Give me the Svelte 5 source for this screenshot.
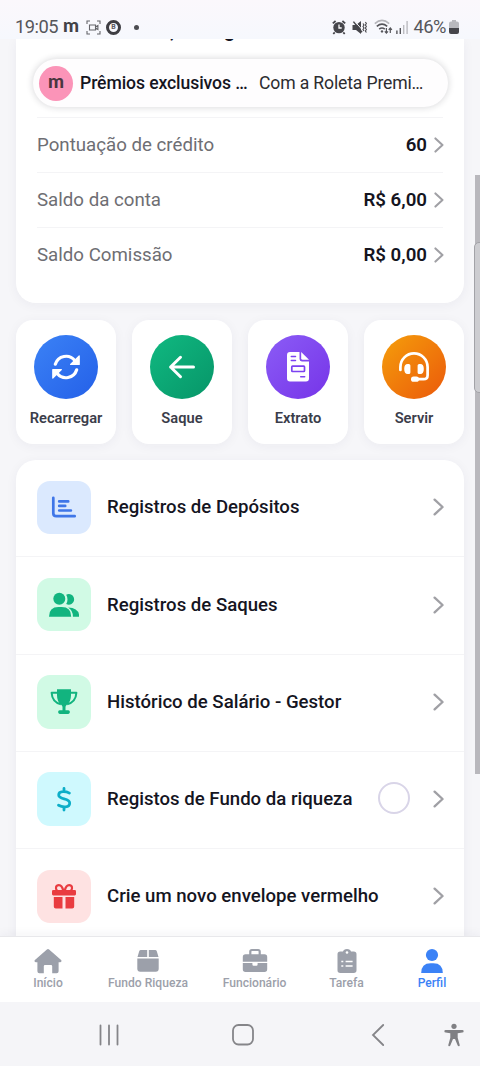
<script>
  const balances = [
    { label: 'Pontuação de crédito', value: '60' },
    { label: 'Saldo da conta', value: 'R$ 6,00' },
    { label: 'Saldo Comissão', value: 'R$ 0,00' }
  ];
  const actions = [
    { label: 'Recarregar', icon: 'refresh', tone: 'blue' },
    { label: 'Saque', icon: 'back', tone: 'green' },
    { label: 'Extrato', icon: 'invoice', tone: 'purple' },
    { label: 'Servir', icon: 'headset', tone: 'orange' }
  ];
  const entries = [
    { label: 'Registros de Depósitos', icon: 'bars', tone: 'sky' },
    { label: 'Registros de Saques', icon: 'users', tone: 'mint' },
    { label: 'Histórico de Salário - Gestor', icon: 'trophy', tone: 'mint' },
    { label: 'Registos de Fundo da riqueza', icon: 'dollar', tone: 'cyan' },
    { label: 'Crie um novo envelope vermelho', icon: 'gift', tone: 'rose' }
  ];
  const tabs = [
    { label: 'Início', icon: 'home' },
    { label: 'Fundo Riqueza', icon: 'box' },
    { label: 'Funcionário', icon: 'briefcase' },
    { label: 'Tarefa', icon: 'clipboard' },
    { label: 'Perfil', icon: 'person', active: true }
  ];
</script>

{#snippet chevron(size)}
  <svg class="chevron" width={size * 0.6} height={size} viewBox="0 0 12 20" fill="none" stroke="#a0a0a5" stroke-width="2.6" stroke-linecap="round" stroke-linejoin="round"><path d="M1.8 1.8 10.6 10 1.8 18.2" /></svg>
{/snippet}

{#snippet actionIcon(name)}
  <svg width="30" height="30" viewBox="0 0 30 30" fill="none" stroke="#fff" stroke-width="3" stroke-linecap="round" stroke-linejoin="round">
    {#if name === 'refresh'}
      <path d="M4.3 12.2A11.3 11.3 0 0 1 23.8 8.4M25.7 17.8A11.3 11.3 0 0 1 6.2 21.6" stroke-width="3.2" />
      <path d="M28.2 4v8.4h-8.6zM1.8 26v-8.4h8.6z" fill="#fff" stroke-width="1.2" />
    {:else if name === 'back'}
      <path d="M3.6 15H26.5M13.5 5.3 3.6 15l9.9 9.7" />
    {:else if name === 'invoice'}
      <path d="M7 0h9.5v7q0 2.4 2.4 2.4H26v17.2q0 3-3 3H7q-3 0-3-3V3q0-3 3-3z" fill="#fff" stroke="none" />
      <path d="M18.2 0 26 7.8h-6.2q-1.6 0-1.6-1.6z" fill="#fff" stroke="none" />
      <path d="M8.3 4.5h4.2M8.3 8.4h4.2M17.7 24.8h4" stroke="#7c42f1" stroke-width="1.5" />
      <rect x="8.8" y="14.2" width="12.7" height="5.3" rx=".7" stroke="#7c42f1" stroke-width="1.7" />
    {:else}
      <path d="M1.4 18v-3a13.6 13.6 0 0 1 27.2 0v8.2q0 4-4 4H17" stroke-width="2.7" />
      <path d="M9.8 12H8.7Q5.2 12 5.2 17t3.5 5h1.1q1.6 0 1.6-1.6v-6.8Q11.4 12 9.8 12zM20.2 12h1.1q3.5 0 3.5 5t-3.5 5h-1.1q-1.6 0-1.6-1.6v-6.8q0-1.6 1.6-1.6z" fill="#fff" stroke="none" />
      <rect x="12" y="24.6" width="8" height="5.2" rx="2.6" fill="#fff" stroke="none" />
    {/if}
  </svg>
{/snippet}

{#snippet entryIcon(name)}
  <svg width="30" height="30" viewBox="0 0 30 30" fill="currentColor">
    {#if name === 'bars'}
      <path d="M4.3 5.8v15.4q0 3 3 3h18.4M10.2 9.4h9M10.2 13.9h6M10.2 18.5h11.7" fill="none" stroke="currentColor" stroke-width="2.7" stroke-linecap="round" />
    {:else if name === 'users'}
      <circle cx="10.3" cy="8.7" r="6" />
      <path d="M0 26.7q0-9.6 9.5-9.6h3.2q9.5 0 9.5 9.6zM17.2 4.8a5.3 5.3 0 1 1 0 9.2q2.6-4.6 0-9.2zM19.2 17.4q11 .3 11 9.3h-6.3q.1-6.3-4.7-9.3z" />
    {:else if name === 'trophy'}
      <path d="M8 2.2h14v6q0 6.8-4.4 9.7-1.1.8-1.1 2v3.4h2.8q1.6 0 1.6 1.8t-1.6 1.8h-8.6q-1.6 0-1.6-1.8t1.6-1.8h2.8v-3.4q0-1.2-1.1-2Q8 15 8 8.2z" />
      <path d="M8 5.7H2.6q.5 9.3 9.3 11.6M22 5.7h5.4q-.5 9.3-9.3 11.6" fill="none" stroke="currentColor" stroke-width="2" stroke-linejoin="round" />
    {:else if name === 'dollar'}
      <path d="M15 4.5v3M15 23v3M20.4 9.1C17.2 7.2 9.7 6.2 9.7 11c0 5.1 11 2.6 11 8 0 5-7.3 4.5-11.2 2.3" fill="none" stroke="currentColor" stroke-width="2.8" stroke-linecap="round" />
    {:else}
      <rect x="3" y="9" width="24" height="5.4" rx="1.3" />
      <path d="M4.8 16h8.7v11.4H6.8q-2 0-2-2zM16.5 16h8.7v9.4q0 2-2 2h-6.7z" />
      <path d="M14.2 9.8c-.6-3.4-2-5.7-4.3-5.7-3.1 0-3.9 3.6-1.8 5.7M15.8 9.8c.6-3.4 2-5.7 4.3-5.7 3.1 0 3.9 3.6 1.8 5.7" fill="none" stroke="currentColor" stroke-width="2.2" />
    {/if}
  </svg>
{/snippet}

{#snippet tabIcon(name)}
  <svg width="28" height="28" viewBox="0 0 28 28" fill="currentColor">
    {#if name === 'home'}
      <path d="M12.9 2.4q1.1-.9 2.2 0l12 10.6q.7.8.3 1.6-.4.7-1.3.7h-1.5v8.9q0 2-2 2h-4.4v-6.9q0-1.2-1.2-1.2h-6q-1.2 0-1.2 1.2v6.9H5.4q-2 0-2-2v-8.9H1.9q-.9 0-1.3-.7-.4-.8.3-1.6z" />
    {:else if name === 'box'}
      <path d="M6.8 3h6.4v7H3.5l1.7-5.8Q5.6 3 6.8 3zM14.8 3h6.4q1.2 0 1.6 1.2l1.7 5.8h-9.7zM3.3 11.5h21.4v10.2q0 3-3 3H6.3q-3 0-3-3z" />
    {:else if name === 'briefcase'}
      <path d="M9.3 8V4.6q0-1.6 1.6-1.6h6.2q1.6 0 1.6 1.6V8" fill="none" stroke="currentColor" stroke-width="2.2" />
      <path d="M4.5 7.3h19q2.7 0 2.7 2.7v4.7H1.8V10q0-2.7 2.7-2.7zM1.8 16h9.6v1.6q0 1.2 1.2 1.2h2.8q1.2 0 1.2-1.2V16h9.6v6.3q0 2.7-2.7 2.7h-19q-2.7 0-2.7-2.7z" />
    {:else if name === 'clipboard'}
      <path d="M7.2 4.6H10q.6-2.6 4-2.6t4 2.6h2.8q2.7 0 2.7 2.7v16q0 2.7-2.7 2.7H7.2q-2.7 0-2.7-2.7v-16q0-2.7 2.7-2.7z" />
      <circle cx="14" cy="5.5" r="1.3" fill="#fff" />
      <path d="M8.3 14.4h2M12.6 14.4h7M8.3 19h2M12.6 19h7" stroke="#fff" stroke-width="1.5" />
    {:else}
      <circle cx="14" cy="8" r="6.1" />
      <path d="M3.2 26q0-9.8 9.4-9.8h2.8q9.4 0 9.4 9.8z" />
    {/if}
  </svg>
{/snippet}

<div class="screen">
  <header class="status">
    <span class="clock">19:05</span>
    <span class="brand">m</span>
    <svg class="rec" width="15" height="15" viewBox="0 0 15 15" fill="none" stroke="#65656a" stroke-width="1.1"><path d="M1 4V1h3M11 1h3v3M14 11v3h-3M4 14H1v-3M3.5 5h6v5h-6zM9.5 7l2.4-1.5v4L9.5 8" /></svg>
    <span class="ring">B</span>
    <span class="dot"></span>
    <span class="spacer"></span>
    <svg width="14" height="15" viewBox="0 0 14 15"><circle cx="7" cy="7.6" r="5.7" fill="#46464b" /><path d="M.8 3.4 3.6 1M13.2 3.4 10.4 1M2.7 12.4 1.3 14M11.3 12.4l1.4 1.6" stroke="#46464b" stroke-width="1.8" /><path d="M7 4.4V8h2.7" stroke="#fff" stroke-width="1.3" fill="none" /></svg>
    <svg class="mute" width="15" height="15" viewBox="0 0 15 15"><path d="M.5 5H4l5-4v13L4 10H.5z" fill="#46464b" /><path d="M2.6 1.2 11 10.6" stroke="#f7f7fc" stroke-width="1" /><path d="M1.4 1.6 10 12.2" stroke="#46464b" stroke-width="1.5" /><path d="M11 3.5l1 1.5-1 1.5 1 1.5-1 1.5 1 1.5M13.4 2l1 1.5-1 1.5 1 1.5-1 1.5 1 1.5-1 1.5 1 1.5" stroke="#46464b" stroke-width="1.1" fill="none" /></svg>
    <svg class="wifi" width="19" height="16" viewBox="0 0 19 16" fill="none" stroke-width="1.6"><path d="M.8 4.6Q8-1.7 15.2 4.6" stroke="#b5b5ba" /><path d="M2.8 7.4Q8 3 13.2 7.4M5.2 10.2q2.8-2.4 5.6 0" stroke="#55555a" /><circle cx="8" cy="12.4" r="1.2" fill="#55555a" /><path d="M12.4 9v5M10.8 12.4l1.6 1.8 1.6-1.8M16.3 14V9M14.7 10.8 16.3 9l1.6 1.8" stroke="#55555a" stroke-width="1.2" /></svg>
    <svg class="signal" width="12" height="13" viewBox="0 0 12 13"><path d="M.9 9.5V13M4.3 7v6" stroke="#55555a" stroke-width="1.4" /><path d="M7.7 4v9M11.1 0v13" stroke="#bbbbc0" stroke-width="1.4" /></svg>
    <span class="percent">46%</span>
    <svg width="10" height="14" viewBox="0 0 10 14"><path d="M2 1.5h1V0h4v1.5h1q2 0 2 2V8H0V3.5q0-2 2-2z" fill="#b9b9be" /><path d="M0 8h10v4q0 2-2 2H2q-2 0-2-2z" fill="#46464b" /></svg>
  </header>

  <main class="page">
    <section class="card summary">
      <div class="heading"><span>,</span><span>g</span></div>
      {#each balances as row}
        <div class="balance">
          <span class="name">{row.label}</span>
          <strong>{row.value}</strong>
          {@render chevron(16)}
        </div>
      {/each}
    </section>

    <section class="actions">
      {#each actions as a}
        <div class="card action">
          <span class="disc {a.tone}">{@render actionIcon(a.icon)}</span>
          <span class="caption">{a.label}</span>
        </div>
      {/each}
    </section>

    <section class="card list">
      {#each entries as e}
        <div class="entry">
          <span class="tile {e.tone}">{@render entryIcon(e.icon)}</span>
          <span class="title">{e.label}</span>
          {@render chevron(18)}
        </div>
      {/each}
    </section>
  </main>

  <nav class="tabs">
    {#each tabs as t}
      <div class="tab" class:active={t.active}>
        {@render tabIcon(t.icon)}
        <span>{t.label}</span>
      </div>
    {/each}
  </nav>

  <footer class="system">
    <svg width="20" height="22" viewBox="0 0 20 22" stroke="#858589" stroke-width="1.8" stroke-linecap="round"><path d="M1.5 1.5v19M10 1.5v19M18.5 1.5v19" /></svg>
    <svg width="22" height="22" viewBox="0 0 22 22" fill="none" stroke="#858589" stroke-width="1.8"><rect x="1" y="1" width="20" height="19.5" rx="5.5" /></svg>
    <svg width="14" height="24" viewBox="0 0 14 24" fill="none" stroke="#858589" stroke-width="1.8" stroke-linecap="round"><path d="M12.2 2 2 12l10.2 10" /></svg>
    <svg width="20" height="24" viewBox="0 0 20 24" fill="#808084"><circle cx="10" cy="3.3" r="2.6" /><path d="M1.6 7h16.8a1.2 1.2 0 0 1 0 2.5l-4.7.7v4.6l2 7.2q.2 1-.6 1.3-1 .2-1.4-.8L11 16H9l-2.7 6.5q-.4 1-1.4.8-.8-.3-.6-1.3l2-7.2v-4.6l-4.7-.7a1.2 1.2 0 0 1 0-2.5z" /></svg>
  </footer>

  <aside class="toast">
    <span class="avatar">m</span>
    <strong>Prêmios exclusivos …</strong>
    <span class="message">Com a Roleta Premi…</span>
  </aside>
  <div class="scrollbar"></div>
  <div class="handle"></div>
  <div class="touch"></div>
</div>

<style>
  :global(body) { margin: 0; }
  .screen {
    position: relative;
    display: flex;
    flex-direction: column;
    width: 480px;
    height: 1066px;
    overflow: hidden;
    background: #f6f6f9;
    color: #15151f;
    font-family: Roboto, sans-serif;
  }
  svg { display: block; flex: none; }

  .status {
    display: flex;
    align-items: center;
    flex: none;
    box-sizing: border-box;
    height: 39px;
    padding: 15px 21px 0 15px;
    background: linear-gradient(#fbf8fc, #f6f8fd);
    color: #56565b;
  }
  .clock { width: 48px; font-size: 18.3px; letter-spacing: -0.5px; line-height: 24px; }
  .brand { width: 23px; font: 900 19px/20px Lato, sans-serif; color: #424247; margin-top: -5px; }
  .ring {
    box-sizing: border-box;
    width: 15px; height: 15px;
    margin-left: 5px;
    border: 3px solid #3e3e43;
    border-radius: 50%;
    font-size: 7px; font-weight: 700; line-height: 9px;
    text-align: center;
  }
  .dot { width: 5px; height: 5px; margin-left: 13px; border-radius: 50%; background: #4c4c51; }
  .spacer { flex: 1; }
  .mute { margin-left: 6px; }
  .wifi { margin-left: 7px; }
  .signal { margin-left: 3px; }
  .percent { margin: 0 3px 0 6px; font-size: 18.3px; letter-spacing: -0.5px; line-height: 24px; }

  .page { flex: none; height: 897px; padding: 0 16px; overflow: hidden; }
  .card { background: #fff; box-shadow: 0 2px 12px rgba(40, 40, 70, 0.05); }
  .summary {
    box-sizing: border-box;
    height: 264px;
    padding: 0 21px 21px;
    border-radius: 0 0 20px 20px;
  }
  .heading {
    display: flex;
    gap: 49px;
    height: 78px;
    padding-left: 133px;
    font-size: 20px; font-weight: 600; line-height: 24px;
    box-sizing: border-box;
  }
  .heading span { margin-top: -21.5px; }
  .balance {
    display: flex;
    align-items: center;
    box-sizing: border-box;
    height: 55px;
    border-top: 1px solid #f4f4f6;
    font-size: 18.7px;
  }
  .name { flex: 1; color: #6e6e73; }
  .balance strong { font-weight: 600; margin-right: 7px; }
  .balance .chevron { margin-right: -0.6px; }

  .actions { display: grid; grid-template-columns: repeat(4, 1fr); gap: 16px; margin: 17px 0 16px; }
  .action {
    display: flex;
    flex-direction: column;
    align-items: center;
    box-sizing: border-box;
    height: 124px;
    padding-top: 15px;
    border-radius: 17px;
  }
  .disc { display: grid; place-items: center; width: 64px; height: 64px; border-radius: 50%; }
  .blue { background: linear-gradient(135deg, #3b82f6, #2460e8); }
  .green { background: linear-gradient(135deg, #10b981, #079568); }
  .purple { background: linear-gradient(135deg, #8b5cf6, #7634e8); }
  .orange { background: linear-gradient(135deg, #f59e0b, #eb590b); }
  .caption { margin-top: 9px; font-size: 14.7px; font-weight: 600; line-height: 20px; color: #3b3d4a; }

  .list { border-radius: 20px 20px 0 0; }
  .entry {
    display: flex;
    align-items: center;
    box-sizing: border-box;
    height: 97.25px;
    padding: 0 20.5px 0 21px;
    border-bottom: 1px solid #f4f4f6;
  }
  .tile { display: grid; place-items: center; width: 54px; height: 53.5px; margin-top: -1.5px; border-radius: 13px; }
  .sky { background: #dbe9fe; color: #3f76e8; }
  .mint { background: #d1fae5; color: #12b47f; }
  .cyan { background: #cff9fe; color: #0caec8; }
  .rose { background: #fee2e2; color: #e93c40; }
  .title { flex: 1; margin: -1.7px 0 0 16px; font-size: 18.63px; font-weight: 500; }
  .entry .chevron { margin-top: -1.5px; }

  .tabs {
    display: grid;
    grid-template-columns: 96px 104px 109px 75px 96px;
    flex: none;
    box-sizing: border-box;
    height: 66px;
    padding-top: 10px;
    border-top: 1px solid #e8e8eb;
    background: #fff;
    box-shadow: 0 -2px 10px rgba(40, 40, 70, 0.05);
  }
  .tab {
    display: flex;
    flex-direction: column;
    align-items: center;
    font-size: 12.1px; font-weight: 500; line-height: 16px;
    color: #9ca0aa;
  }
  .active { color: #3b82f6; }

  .system { display: flex; align-items: center; flex: 1; padding: 2px 16px 0 98.5px; background: #f5f5f8; }
  .system svg:nth-child(2) { margin-left: 113px; }
  .system svg:nth-child(3) { margin-left: 117px; }
  .system svg:nth-child(4) { margin-left: 59.5px; }

  .toast {
    position: absolute;
    left: 33px; top: 59px;
    display: flex;
    align-items: center;
    box-sizing: border-box;
    width: 415px; height: 48px;
    padding-left: 6px;
    border-radius: 24px;
    background: #fefdfe;
    box-shadow: 0 0 6px 1px rgba(30, 30, 40, 0.15);
    font-size: 17.6px;
    white-space: nowrap;
  }
  .avatar {
    width: 34px; height: 35px;
    border-radius: 50%;
    background: #fb94b8;
    color: #4b3640;
    font: 900 19px/30px Lato, sans-serif;
    text-align: center;
  }
  .toast strong { width: 167px; margin-left: 7px; font-weight: 500; letter-spacing: -0.1px; }
  .message { margin-left: 12px; color: #2c2c30; letter-spacing: -0.15px; }
  .scrollbar { position: absolute; right: 0; top: 175px; width: 5px; height: 599px; background: #b9b8bd; }
  .handle {
    position: absolute;
    right: -6px; top: 242px;
    box-sizing: border-box;
    width: 12px; height: 151px;
    border: 1px solid #a3a3a8;
    border-radius: 5px;
    background: #cdcdd1;
  }
  .touch {
    position: absolute;
    left: 378px; top: 782px;
    box-sizing: border-box;
    width: 32px; height: 32px;
    border: 2px solid #d9d5e8;
    border-radius: 50%;
  }
</style>
